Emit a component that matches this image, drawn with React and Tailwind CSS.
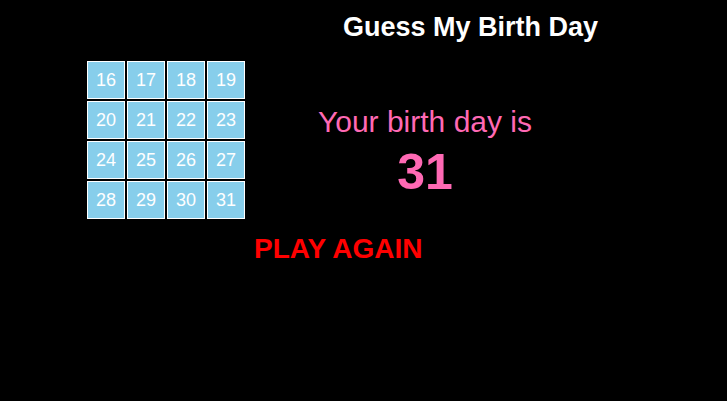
import React from 'react';

const days = [16, 17, 18, 19, 20, 21, 22, 23, 24, 25, 26, 27, 28, 29, 30, 31];

const App = () => {
  return (
    <div className="w-full h-[401px] bg-black overflow-hidden" style={{ fontFamily: '"Liberation Sans", Arial, sans-serif' }}>
      <h2 className="pt-[14px] pl-[343px] text-[27px] font-bold leading-none text-white">Guess My Birth Day</h2>

      <div className="flex mt-[20px]">
        <div className="ml-[87px] grid grid-cols-[repeat(4,38px)] auto-rows-[38px] gap-[2px]">
          {days.map((d) => (
            <div key={d} className="bg-[#87ceeb] border border-white flex items-center justify-center text-white text-[18px] leading-none">
              {d}
            </div>
          ))}
        </div>

        <div className="ml-[20px] w-[320px] pt-[46px] text-center text-[#ff69b4]">
          <p className="text-[30px] leading-none">Your birth day is</p>
          <p className="mt-[10px] text-[50px] font-bold leading-none">31</p>
        </div>
      </div>

      <button className="block mt-[16px] ml-[254px] text-[28px] font-bold leading-none text-[#ff0000]">PLAY AGAIN</button>
    </div>
  );
};

export default App;
